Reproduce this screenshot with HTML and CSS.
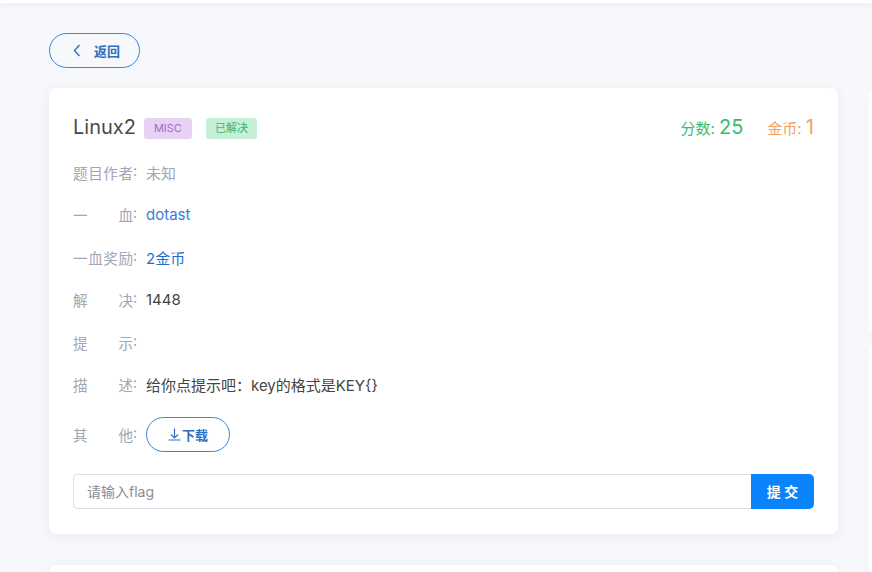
FILE: index.html
```html
<!DOCTYPE html>
<html lang="zh-CN">
<head>
    <meta charset="UTF-8">
    <meta name="viewport" content="width=device-width, initial-scale=1.0">
    <title>Linux2</title>
    <link rel="stylesheet" href="styles.css">
</head>
<body>
    <div class="topbar"></div>
    <div class="page">
        <div class="main">
            <button class="back-btn">
                <svg class="chev" width="8" height="13" viewBox="0 0 8 13"><path d="M6.5 1 L1.5 6.5 L6.5 12" fill="none" stroke="currentColor" stroke-width="1.4"/></svg>
                <span>返回</span>
            </button>

            <div class="card">
                <div class="card-head">
                    <div class="title">
                        <span class="name">Linux2</span>
                        <span class="tag tag-misc">MISC</span>
                        <span class="tag tag-solved">已解决</span>
                    </div>
                    <div class="stats">
                        <span class="score">分数: <b>25</b></span>
                        <span class="coin">金币: <b>1</b></span>
                    </div>
                </div>

                <div class="row">
                    <div class="label"><span>题目作者</span>:</div>
                    <div class="value muted">未知</div>
                </div>
                <div class="row">
                    <div class="label"><span>一血</span>:</div>
                    <div class="value link">dotast</div>
                </div>
                <div class="row">
                    <div class="label"><span>一血奖励</span>:</div>
                    <div class="value link dark-link">2金币</div>
                </div>
                <div class="row">
                    <div class="label"><span>解决</span>:</div>
                    <div class="value">1448</div>
                </div>
                <div class="row">
                    <div class="label"><span>提示</span>:</div>
                    <div class="value"></div>
                </div>
                <div class="row">
                    <div class="label"><span>描述</span>:</div>
                    <div class="value">给你点提示吧：key的格式是KEY{}</div>
                </div>
                <div class="row row-btn">
                    <div class="label"><span>其他</span>:</div>
                    <div class="value">
                        <button class="dl-btn">
                            <svg width="13" height="14" viewBox="0 0 13 14"><path d="M6.5 1.5 V11 M3 7.5 L6.5 11 L10 7.5 M0.5 13 H12.5" fill="none" stroke="currentColor" stroke-width="1.2"/></svg>
                            <span>下载</span>
                        </button>
                    </div>
                </div>

                <div class="flag-form">
                    <input class="flag-input" type="text" placeholder="请输入flag">
                    <button class="submit-btn">提 交</button>
                </div>
            </div>

            <div class="card card-next"></div>
        </div>
        <div class="side">
            <div class="side-card"></div>
            <div class="side-card side-card-2"></div>
        </div>
    </div>
</body>
</html>
```

FILE: styles.css
```css
body {
    margin: 0;
    padding: 0;
    background-color: #f7f8fb;
    font-family: Inter, "Noto Sans CJK SC", sans-serif;
    color: #4a4a4a;
    overflow: hidden;
}

.topbar {
    height: 3px;
    background-color: #fff;
    box-shadow: 0 2px 6px rgba(0, 0, 0, 0.08);
}

.page {
    display: flex;
    gap: 31px;
    padding: 30px 0 0 49px;
}

.main {
    width: 789px;
    flex-shrink: 0;
}

.back-btn {
    display: flex;
    align-items: center;
    gap: 13px;
    width: 91px;
    height: 35px;
    padding: 0 0 0 23px;
    border: 1px solid #3a87d6;
    border-radius: 18px;
    background: transparent;
    color: #2d6fc4;
    font-family: Inter, "Noto Sans CJK SC", sans-serif;
    font-size: 13px;
    font-weight: 700;
    cursor: pointer;
}

.card {
    margin-top: 20px;
    background-color: #fff;
    border-radius: 8px;
    box-shadow: 0 2px 14px rgba(0, 0, 0, 0.06);
    padding: 25px 24px 24px;
}

.card-next {
    margin-top: 31px;
    height: 200px;
}

.card-head {
    display: flex;
    justify-content: space-between;
    align-items: center;
    height: 28px;
    margin-bottom: 20px;
}

.title {
    display: flex;
    align-items: center;
}

.name {
    font-size: 20px;
    color: #4a4a4a;
    margin-right: 8px;
}

.tag {
    display: inline-block;
    height: 21px;
    line-height: 21px;
    padding: 0 10px;
    border-radius: 3px;
    font-size: 11px;
    margin-right: 14px;
    margin-top: 2px;
}

.tag-misc {
    background-color: #e6d2f3;
    color: #a56bcc;
}

.tag-solved {
    background-color: #c5efd6;
    color: #3fb56c;
    padding: 0 9px;
}

.stats {
    display: flex;
    align-items: baseline;
    gap: 24px;
    font-size: 15px;
}

.stats b {
    font-weight: 400;
    font-size: 20px;
}

.score {
    color: #3cba6d;
}

.coin {
    color: #f1a061;
}

.row {
    display: flex;
    align-items: center;
    height: 22px;
    margin-bottom: 20.6px;
    font-size: 15px;
}

.row-btn {
    height: 35px;
    margin-bottom: 22px;
}

.label {
    width: 73px;
    flex-shrink: 0;
    color: #a2a6b1;
    display: flex;
    font-size: 14.6px;
}

.label span {
    width: 60px;
    text-align: justify;
    text-align-last: justify;
}

.value {
    color: #444;
}

.muted {
    color: #a2a6b1;
}

.link {
    color: #3a7dd6;
}

.dark-link {
    color: #1f6fcf;
}

.dl-btn {
    display: flex;
    align-items: center;
    justify-content: center;
    gap: 1px;
    width: 84px;
    height: 35px;
    padding: 0;
    border: 1px solid #3a87d6;
    border-radius: 18px;
    background: #fff;
    color: #2d6fc4;
    font-family: Inter, "Noto Sans CJK SC", sans-serif;
    font-size: 13px;
    font-weight: 700;
    cursor: pointer;
}

.flag-form {
    display: flex;
    height: 35px;
    margin-bottom: 1px;
}

.flag-input {
    flex: 1;
    height: 35px;
    box-sizing: border-box;
    border: 1px solid #dcdfe6;
    border-right: none;
    border-radius: 5px 0 0 5px;
    padding: 0 13px;
    font-family: Inter, "Noto Sans CJK SC", sans-serif;
    font-size: 14px;
    outline: none;
}

.flag-input::placeholder {
    color: #8a8d93;
}

.submit-btn {
    width: 63px;
    height: 35px;
    border: none;
    border-radius: 0 5px 5px 0;
    background-color: #0a84fa;
    color: #fff;
    font-family: Inter, "Noto Sans CJK SC", sans-serif;
    font-size: 14px;
    font-weight: 700;
    cursor: pointer;
}

.side {
    flex: 1;
    padding-top: 58px;
}

.side-card {
    height: 240px;
    background-color: #fff;
    border-radius: 8px 0 0 8px;
    box-shadow: 0 2px 14px rgba(0, 0, 0, 0.06);
}

.side-card-2 {
    margin-top: 14px;
    height: 300px;
}
```
